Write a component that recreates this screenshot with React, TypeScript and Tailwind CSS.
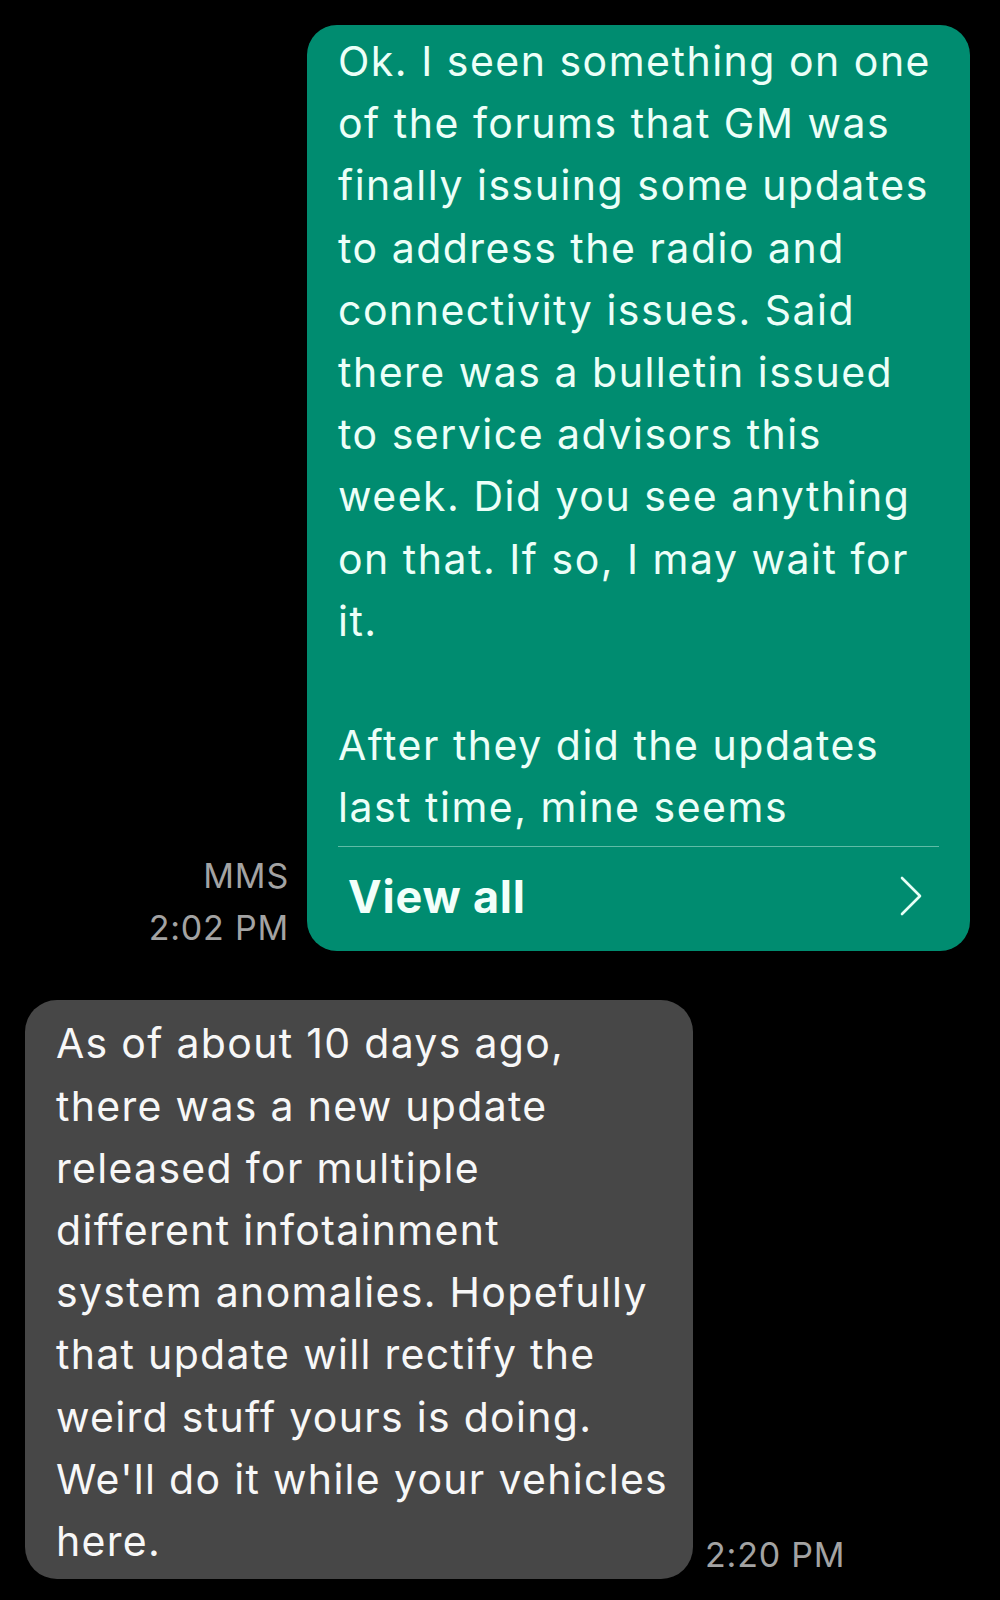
import React from 'react';

const sent = [
  'Ok. I seen something on one',
  'of the forums that GM was',
  'finally issuing some updates',
  'to address the radio and',
  'connectivity issues. Said',
  'there was a bulletin issued',
  'to service advisors this',
  'week. Did you see anything',
  'on that. If so, I may wait for',
  'it.',
  '',
  'After they did the updates',
  'last time, mine seems',
];

const received = [
  'As of about 10 days ago,',
  'there was a new update',
  'released for multiple',
  'different infotainment',
  'system anomalies. Hopefully',
  'that update will rectify the',
  'weird stuff yours is doing.',
  "We'll do it while your vehicles",
  'here.',
];

const Line: React.FC<{ text: string }> = ({ text }) => (
  <div className="h-[62.2px] leading-[62.2px] whitespace-pre">{text || ' '}</div>
);

const App: React.FC = () => {
  return (
    <div
      className="w-[1000px] h-[1600px] bg-black overflow-hidden"
      style={{ fontFamily: 'Inter, Roboto, "Liberation Sans", sans-serif' }}
    >
      {/* sent message */}
      <div className="flex justify-end items-end gap-[18px] pt-[25px] pr-[30px]">
        <div className="flex flex-col items-end gap-[6px] text-[34px] text-[#a3a3a3] leading-[46px] tracking-[0.8px]">
          <span>MMS</span>
          <span>2:02 PM</span>
        </div>
        <div className="w-[663px] bg-[#008c70] rounded-[30px] pt-[5px] px-[31px] text-[41px] tracking-[1.5px] text-[#ecfff8]">
          {sent.map((t, i) => (
            <Line key={i} text={t} />
          ))}
          <div className="mt-[8px] border-t border-[#5fbca6]" />
          <div className="flex items-center justify-between h-[104px] pb-[6px]">
            <span className="pl-[10px] text-[45px] font-bold tracking-[0.8px] text-[#f2fffa]">View all</span>
            <svg width="24" height="40" viewBox="0 0 24 40" className="mr-[16px]" fill="none">
              <path d="M3 2 L21 20 L3 38" stroke="#e6fff6" strokeWidth="2.6" strokeLinecap="round" strokeLinejoin="round" />
            </svg>
          </div>
        </div>
      </div>

      {/* received message */}
      <div className="flex items-end gap-[12px] pl-[25px] mt-[49px]">
        <div className="w-[668px] bg-[#474747] rounded-[32px] pt-[12px] pb-[7px] px-[31px] text-[41px] tracking-[1.3px] text-[#f7f7f7]">
          {received.map((t, i) => (
            <Line key={i} text={t} />
          ))}
        </div>
        <span className="text-[34px] text-[#a3a3a3] leading-[40px] pb-[4px] tracking-[0.8px]">2:20 PM</span>
      </div>
    </div>
  );
};

export default App;
